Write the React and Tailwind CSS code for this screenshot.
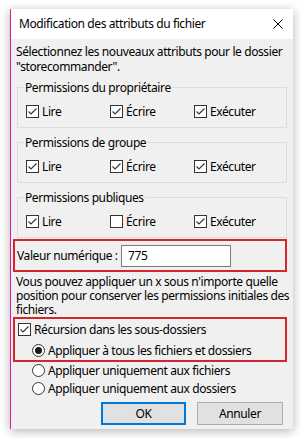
import React from 'react'

function Check({ checked }) {
  return (
    <span className="w-[13px] h-[13px] border border-[#333] bg-white flex items-center justify-center shrink-0">
      {checked && (
        <svg width="11" height="11" viewBox="0 0 11 11">
          <polyline points="1.5,5.5 4,8 9.5,2.5" fill="none" stroke="#333" strokeWidth="1.1" />
        </svg>
      )}
    </span>
  )
}

function Radio({ checked }) {
  return (
    <span className="w-[13px] h-[13px] rounded-full border border-[#333] bg-white flex items-center justify-center shrink-0">
      {checked && <span className="w-[7px] h-[7px] rounded-full bg-[#1a1a1a]" />}
    </span>
  )
}

function CheckItem({ label, checked }) {
  return (
    <div className="w-[84px] h-[15px] flex items-center gap-[3px]">
      <Check checked={checked} />
      <span>{label}</span>
    </div>
  )
}

function Group({ title, values, className }) {
  return (
    <fieldset className={`ml-[1px] border border-[#dcdcdc] pl-[8px] pt-[9px] pb-[8px] ${className}`}>
      <legend className="ml-[-2px] px-[1px] leading-[15px]">{title}</legend>
      <div className="flex">
        <CheckItem label="Lire" checked={values[0]} />
        <CheckItem label="Écrire" checked={values[1]} />
        <CheckItem label="Exécuter" checked={values[2]} />
      </div>
    </fieldset>
  )
}

function RadioItem({ label, checked, className }) {
  return (
    <div className={`h-[15px] flex items-center gap-[3px] ${className}`}>
      <Radio checked={checked} />
      <span>{label}</span>
    </div>
  )
}

export default function App() {
  return (
    <div className="w-[301px] h-[438px] bg-white pt-[9px] pl-[10px] font-['Noto_Sans',sans-serif] text-[12px] tracking-[-0.4px] text-black">
      <div className="w-[283px] h-[420px] border-l border-[#e5179d] bg-[#f0f0f0] shadow-[0_2px_10px_rgba(0,0,0,0.3)] flex flex-col">
        {/* Title bar */}
        <div className="h-[30px] bg-white flex items-center justify-between pl-[8px] pr-[10px]">
          <span>Modification des attributs du fichier</span>
          <svg width="10" height="10" viewBox="0 0 10 10">
            <path d="M0.5 0.5 L9.5 9.5 M9.5 0.5 L0.5 9.5" stroke="#000" strokeWidth="1" />
          </svg>
        </div>

        <div className="flex-1 pl-[5px] pr-[6px] pt-[5px] flex flex-col">
          <p className="leading-[15px]">
            Sélectionnez les nouveaux attributs pour le dossier "storecommander".
          </p>

          <Group className="mt-[6px]" title="Permissions du propriétaire" values={[true, true, true]} />
          <Group className="mt-[7px]" title="Permissions de groupe" values={[true, true, true]} />
          <Group className="mt-[7px]" title="Permissions publiques" values={[true, false, true]} />

          {/* Valeur numérique */}
          <div className="mt-[1px] ml-[-3px] h-[33px] border-2 border-[#d5262e] flex items-center pl-[2px]">
            <span className="w-[104px] whitespace-nowrap">Valeur numérique :</span>
            <div className="w-[110px] h-[22px] border border-[#7a7a7a] bg-white flex items-center pl-[6px]">775</div>
          </div>

          <p className="mt-[3px] mr-[-4px] leading-[14px]">
            Vous pouvez appliquer un x sous n'importe quelle position pour conserver les permissions initiales des fichiers.
          </p>

          {/* Récursion */}
          <div className="ml-[-3px] h-[45px] border-2 border-[#d5262e] pt-[3px] flex flex-col">
            <div className="h-[15px] flex items-center gap-[3px] pl-[3px]">
              <Check checked />
              <span>Récursion dans les sous-dossiers</span>
            </div>
            <RadioItem className="mt-[6px] ml-[17px]" label="Appliquer à tous les fichiers et dossiers" checked />
          </div>
          <RadioItem className="mt-[1px] ml-[16px]" label="Appliquer uniquement aux fichiers" />
          <RadioItem className="mt-[3px] ml-[16px]" label="Appliquer uniquement aux dossiers" />

          <div className="mt-[6px] flex justify-end gap-[11px] pr-[4px]">
            <button className="w-[85px] h-[23px] border-2 border-[#0078d7] bg-[#e1e1e1]">OK</button>
            <button className="w-[86px] h-[23px] border border-[#adadad] bg-[#e1e1e1]">Annuler</button>
          </div>
        </div>
      </div>
    </div>
  )
}
